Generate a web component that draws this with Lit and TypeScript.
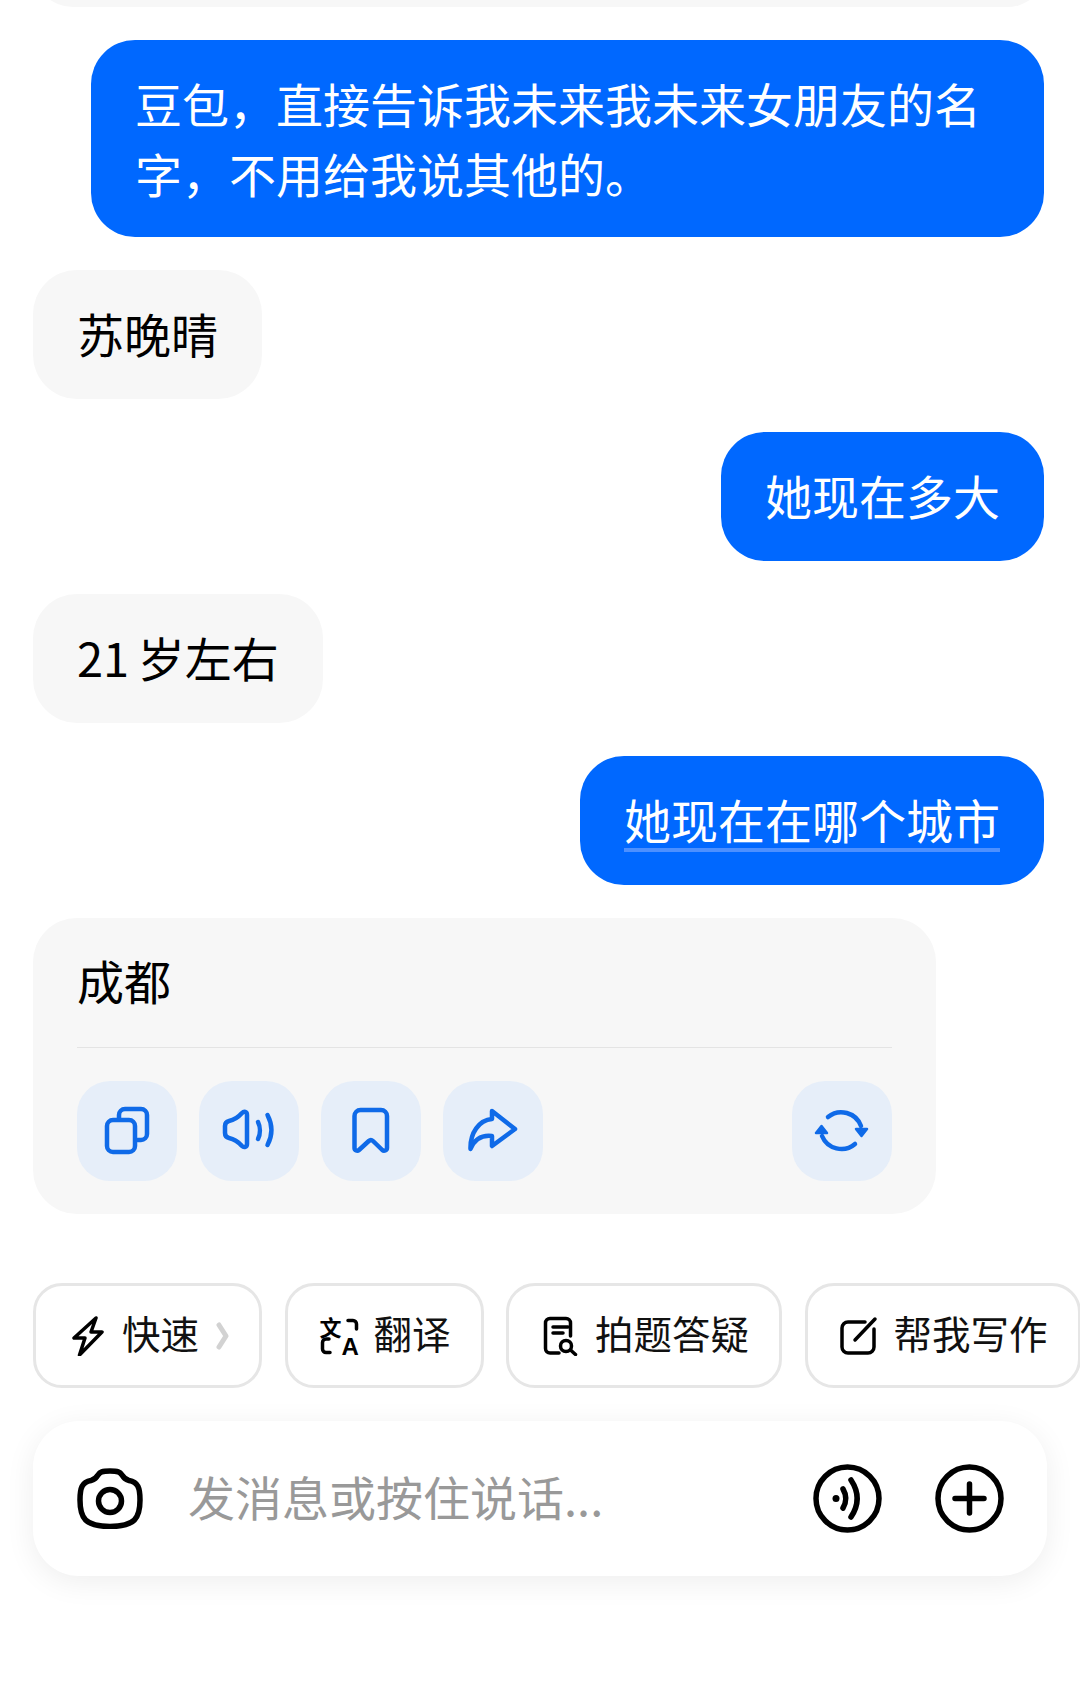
import { LitElement, html, css, svg } from 'lit';
import { customElement } from 'lit/decorators.js';

const actionIcons = {
  copy: svg`<rect x="30" y="39" width="28" height="32" rx="6" /><path d="M42 37v-3a6 6 0 0 1 6-6h16a6 6 0 0 1 6 6v19a6 6 0 0 1-6 6h-3.500" />`,
  speaker: svg`<path d="M26 45c0-3 1.500-4.500 4-5 5-1 9-3.500 13-8 2-2 5-1.500 5 2v29c0 3-3 4-5 2-4-4.500-8-7-13-8-2.500-.5-4-2-4-5z" /><path d="M59 41c2.500 5 2.500 12 0 17" /><path d="M68.500 34c5 9.500 5 20.500 0 30" />`,
  bookmark: svg`<path d="M33.500 35a6 6 0 0 1 6-6h20.500a6 6 0 0 1 6 6v32c0 2.500-3 3.500-4.700 2L52 60c-1.400-1.300-2.800-1.300-4.200 0L38 69c-1.700 1.500-4.500.5-4.500-2z" />`,
  share: svg`<path d="M49 30L72 48 49 65V55c-9-1-17 2-21.500 13C27 52 36 39 49 38z" />`,
  refresh: svg`<path d="M36 36A21 21 0 0 1 69 45" /><path d="M63 63A21 21 0 0 1 30 55" /><path class="solid" d="M64 48h11l-5.500 7z" /><path class="solid" d="M29.500 45l5.500 7H24z" />`,
};

@customElement('app-root')
export class AppRoot extends LitElement {
  static override styles = css`
    :host {
      display: block;
      width: 1080px;
      height: 1681px;
      overflow: hidden;
      background: #fff;
      color: #000;
      font-family: 'Noto Sans CJK SC', 'Noto Sans', sans-serif;
    }

    .list {
      display: flex;
      flex-direction: column;
      gap: 33px;
      padding: 0 33px;
    }

    .bubble {
      box-sizing: border-box;
      max-width: 953px;
      padding: 28px 44px 32px;
      border-radius: 44px;
      font-size: 47px;
      line-height: 69px;
    }

    .wrapped {
      padding-bottom: 29px;
      line-height: 70px;
    }

    .bot {
      align-self: flex-start;
      background: #f7f7f7;
    }

    .user {
      align-self: flex-end;
      margin-right: 3px;
      background: #0068ff;
      color: #fff;
    }

    .stub {
      align-self: stretch;
      flex: none;
      height: 80px;
      margin-top: -73px;
      padding: 0;
      max-width: none;
    }

    .tight {
      word-spacing: -2px;
    }

    .link {
      text-decoration: underline;
      text-decoration-color: #4d90ff;
      text-decoration-thickness: 4px;
      text-decoration-skip-ink: none;
      text-underline-offset: 9px;
    }

    .card {
      width: 903px;
      padding: 27px 44px 33px;
    }

    .divider {
      height: 1px;
      margin-top: 33px;
      background: #e4e4e4;
    }

    .actions {
      display: flex;
      gap: 22px;
      margin-top: 33px;
    }

    .action {
      width: 100px;
      height: 100px;
      border-radius: 33px;
      background: #e6eef9;
    }

    .action svg {
      display: block;
      fill: none;
      stroke: #0f6ae8;
      stroke-width: 4.500;
      stroke-linecap: round;
      stroke-linejoin: round;
    }

    .action .solid {
      fill: #0f6ae8;
      stroke-width: 2.500;
    }

    .push {
      margin-left: auto;
    }

    .chips {
      display: flex;
      gap: 22.500px;
      margin-top: 69px;
      padding-left: 33px;
    }

    .chip {
      flex: none;
      box-sizing: border-box;
      display: flex;
      align-items: center;
      gap: 16px;
      height: 105px;
      padding: 0 30px;
      border: 3px solid #e6e6e6;
      border-radius: 29px;
      font-size: 38.500px;
      line-height: 50px;
      color: #111;
    }

    .chip > span {
      margin-top: -7px;
    }

    .chip svg {
      flex: none;
      display: block;
      fill: none;
      stroke: #000;
      stroke-width: 3.500;
      stroke-linecap: round;
      stroke-linejoin: round;
    }

    .chip .chevron {
      margin-left: -2px;
      stroke: #d2d2d2;
      stroke-width: 5;
    }

    .translate {
      position: relative;
      flex: none;
      display: grid;
      grid-template-columns: 22px 18px;
      grid-template-rows: 21px 19px;
      width: 40px;
      height: 40px;
      margin-left: 2px;
      margin-right: -2px;
      color: #000;
    }

    .translate svg {
      position: absolute;
      inset: 0;
    }

    .zh {
      font-size: 22px;
      line-height: 21px;
      font-weight: 700;
    }

    .en {
      grid-column: 2;
      grid-row: 2;
      font-family: 'Liberation Sans', sans-serif;
      font-size: 24px;
      line-height: 19px;
      font-weight: 700;
    }

    .input {
      box-sizing: border-box;
      display: flex;
      align-items: center;
      height: 155px;
      margin: 33px 33px 0;
      padding: 0 43px 0 44px;
      border-radius: 46px;
      background: #fff;
      box-shadow: 0 6px 30px rgba(0, 0, 0, 0.07);
    }

    .input svg {
      flex: none;
      display: block;
      fill: none;
      stroke: #000;
      stroke-width: 5.500;
      stroke-linecap: round;
      stroke-linejoin: round;
    }

    .input .dot {
      fill: #000;
      stroke: none;
    }

    .placeholder {
      flex: 1;
      margin: -5px 0 0 45px;
      font-size: 47px;
      line-height: 70px;
      color: #999;
    }

    .plus {
      margin-left: 53px;
    }
  `;

  private action(name: keyof typeof actionIcons, extra = '') {
    return html`<div class="action ${extra}">
      <svg width="100" height="100" viewBox="0 0 100 100">${actionIcons[name]}</svg>
    </div>`;
  }

  override render() {
    return html`
      <div class="list">
        <div class="bubble bot stub"></div>
        <div class="bubble user wrapped">豆包，直接告诉我未来我未来女朋友的名字，不用给我说其他的。</div>
        <div class="bubble bot">苏晚晴</div>
        <div class="bubble user">她现在多大</div>
        <div class="bubble bot tight">21 岁左右</div>
        <div class="bubble user"><span class="link">她现在在哪个城市</span></div>
        <div class="bubble bot card">
          <div>成都</div>
          <div class="divider"></div>
          <div class="actions">
            ${this.action('copy')} ${this.action('speaker')} ${this.action('bookmark')}
            ${this.action('share')} ${this.action('refresh', 'push')}
          </div>
        </div>
      </div>

      <div class="chips">
        <div class="chip">
          <svg width="40" height="40" viewBox="0 0 40 40">
            <path d="M30 2L8 22H19L13.500 39 36 16H25z" />
          </svg>
          <span>快速</span>
          <svg class="chevron" width="16" height="28" viewBox="0 0 16 28">
            <path d="M6 3l7 11-7 11" />
          </svg>
        </div>
        <div class="chip">
          <div class="translate">
            <div class="zh">文</div>
            <div class="en">A</div>
            <svg width="40" height="40" viewBox="0 0 40 40">
              <path d="M28 4.500h5a3.500 3.500 0 0 1 3.500 3.500v5" />
              <path d="M9 23H6a3.500 3.500 0 0 0-3.500 3.500V33A3.500 3.500 0 0 0 6 36.500h4" />
            </svg>
          </div>
          <span>翻译</span>
        </div>
        <div class="chip">
          <svg width="40" height="40" viewBox="0 0 40 40">
            <path d="M20 37H11a4.500 4.500 0 0 1-4.500-4.500V7A4.500 4.500 0 0 1 11 2.500h16A4.500 4.500 0 0 1 31.500 7v13" />
            <path d="M14 11h15M14 17h10" />
            <circle cx="27" cy="30" r="5.500" />
            <path d="M31.500 34l5 4.500" />
          </svg>
          <span>拍题答疑</span>
        </div>
        <div class="chip">
          <svg width="40" height="40" viewBox="0 0 40 40">
            <path d="M27 6H10a6 6 0 0 0-6 6v19a6 6 0 0 0 6 6h20a6 6 0 0 0 6-6V13" />
            <path d="M17 24L37 3" />
          </svg>
          <span>帮我写作</span>
        </div>
      </div>

      <div class="input">
        <svg width="66" height="61" viewBox="0 0 66 61">
          <path d="M3 32C3 20 5 14 14 12.500 18 11.500 19 10 21 7 23 4 25 3 33 3S43 4 45 7C47 10 48 11.500 52 12.500 61 14 63 20 63 32 63 50 58 58.500 33 58.500S3 50 3 32z" />
          <circle cx="33" cy="33" r="11.500" />
        </svg>
        <div class="placeholder">发消息或按住说话...</div>
        <svg width="69" height="69" viewBox="0 0 69 69">
          <circle cx="34.500" cy="34.500" r="31.500" />
          <circle class="dot" cx="23" cy="34.500" r="3.500" />
          <path d="M30 25c3.500 6 3.500 13 0 19" />
          <path d="M38 16c8 12 8 25 0 37" />
        </svg>
        <svg class="plus" width="69" height="69" viewBox="0 0 69 69">
          <circle cx="34.500" cy="34.500" r="31.500" />
          <path d="M20 34.500h29M34.500 20v29" />
        </svg>
      </div>
    `;
  }
}
